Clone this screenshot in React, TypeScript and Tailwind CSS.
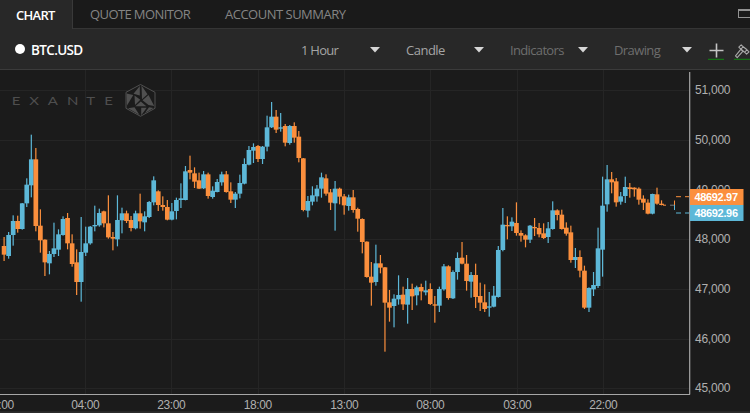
import clsx from "clsx";

const UP = "#5db8d8";
const DOWN = "#fb8f3d";

// direction, high, top, bottom, low - thirds of a pixel below the segment base
type Bar = ["u" | "d", number, number, number, number];

const segments: { base: number; bars: Bar[] }[] = [
  {
    base: 120,
    bars: [
      ["d", 351, 378, 404, 423], ["u", 336, 345, 408, 416], ["u", 286, 303, 345, 377],
      ["d", 287, 303, 327, 338], ["u", 249, 250, 327, 329], ["u", 175, 194, 250, 261],
      ["u", 44, 118, 196, 232], ["d", 84, 118, 318, 334], ["d", 268, 317, 361, 398],
      ["d", 358, 359, 427, 468], ["u", 393, 402, 430, 463], ["u", 308, 385, 402, 411],
      ["u", 328, 343, 389, 408], ["u", 289, 297, 345, 347], ["d", 279, 294, 370, 388],
      ["d", 343, 370, 432, 440], ["d", 388, 427, 486, 525], ["u", 291, 396, 486, 545],
      ["u", 320, 370, 398, 408], ["u", 318, 320, 370, 374], ["u", 257, 315, 319, 334],
      ["u", 266, 279, 316, 320], ["d", 272, 274, 310, 322], ["d", 226, 310, 352, 356],
      ["d", 336, 351, 356, 391], ["u", 226, 300, 358, 379], ["u", 263, 280, 301, 340],
      ["d", 272, 280, 303, 309], ["d", 288, 300, 324, 334], ["u", 272, 280, 325, 328],
      ["d", 221, 280, 304, 326], ["u", 274, 289, 307, 334], ["u", 243, 246, 291, 294],
      ["u", 169, 181, 247, 256], ["d", 211, 214, 255, 273], ["d", 229, 255, 261, 272],
      ["d", 240, 261, 299, 301], ["u", 249, 274, 299, 301], ["u", 233, 240, 273, 298],
      ["u", 190, 235, 240, 264], ["u", 138, 154, 240, 241], ["d", 107, 150, 158, 178],
      ["d", 142, 160, 185, 204], ["d", 158, 181, 206, 207], ["u", 153, 163, 205, 207],
      ["d", 158, 163, 228, 236], ["u", 199, 212, 231, 236], ["u", 177, 186, 216, 217],
      ["u", 155, 163, 187, 197], ["d", 153, 163, 216, 218], ["d", 187, 214, 239, 249],
    ],
  },
  {
    base: 90,
    bars: [
      ["u", 306, 311, 329, 354], ["u", 254, 279, 311, 325], ["u", 205, 222, 281, 283],
      ["u", 168, 180, 224, 226], ["u", 160, 171, 182, 219], ["d", 165, 168, 207, 216],
      ["u", 168, 170, 207, 222], ["u", 77, 112, 170, 184], ["u", 36, 80, 112, 114],
      ["d", 60, 80, 119, 129], ["u", 69, 112, 116, 125], ["d", 102, 108, 158, 169],
      ["u", 105, 108, 159, 164], ["d", 97, 108, 143, 158], ["d", 123, 140, 204, 217],
      ["d", 204, 205, 360, 364], ["u", 318, 333, 362, 382], ["u", 289, 316, 335, 346],
      ["u", 285, 296, 319, 335], ["u", 248, 262, 296, 323], ["d", 253, 265, 311, 317],
      ["d", 297, 307, 338, 360], ["u", 273, 296, 340, 422], ["d", 293, 296, 320, 343],
      ["d", 312, 319, 346, 374], ["u", 314, 322, 348, 362], ["d", 300, 322, 360, 368],
      ["d", 353, 357, 386, 425],
    ],
  },
  {
    base: 170,
    bars: [
      ["d", 145, 147, 216, 250], ["d", 214, 215, 321, 323], ["d", 276, 320, 338, 407],
      ["u", 224, 280, 336, 347], ["d", 255, 280, 293, 310], ["d", 291, 292, 398, 545],
      ["d", 360, 397, 413, 455], ["u", 373, 386, 408, 472], ["u", 316, 375, 388, 404],
      ["d", 350, 374, 403, 420], ["u", 324, 357, 404, 461], ["d", 341, 357, 379, 420],
      ["u", 347, 352, 376, 406], ["d", 341, 351, 364, 391], ["u", 332, 361, 367, 376],
      ["d", 340, 357, 402, 405], ["d", 378, 403, 407, 458], ["u", 350, 357, 407, 426],
      ["u", 282, 289, 358, 362], ["d", 286, 289, 384, 389], ["u", 301, 306, 385, 387],
      ["u", 247, 264, 306, 329],
    ],
  },
  {
    base: 180,
    bars: [
      ["d", 186, 233, 251, 253], ["d", 225, 251, 303, 332], ["u", 276, 285, 305, 353],
      ["d", 251, 285, 351, 384], ["d", 308, 348, 368, 393], ["d", 313, 367, 387, 396],
      ["u", 336, 379, 383, 410], ["u", 318, 347, 380, 382], ["u", 198, 210, 351, 353],
      ["u", 84, 134, 210, 214], ["d", 109, 135, 138, 178], ["u", 112, 125, 139, 153],
      ["d", 67, 129, 159, 167], ["d", 151, 159, 167, 185], ["d", 163, 166, 179, 202],
      ["u", 135, 137, 179, 189], ["d", 114, 141, 144, 168], ["d", 129, 144, 163, 172],
      ["d", 130, 160, 174, 177], ["u", 126, 145, 171, 189], ["u", 64, 91, 147, 149],
      ["d", 88, 91, 105, 121], ["d", 89, 104, 147, 149], ["d", 127, 143, 161, 167],
    ],
  },
  {
    base: 150,
    bars: [
      ["d", 227, 247, 330, 338], ["u", 294, 321, 330, 354], ["d", 301, 321, 362, 382],
      ["d", 347, 362, 473, 477], ["u", 412, 414, 473, 486], ["u", 366, 405, 418, 438],
      ["u", 233, 295, 408, 414], ["u", 80, 167, 299, 380], ["u", 45, 88, 163, 185],
      ["d", 66, 88, 97, 130], ["d", 84, 94, 157, 170], ["u", 126, 139, 155, 164],
      ["u", 80, 111, 138, 159], ["d", 99, 112, 117, 143], ["d", 112, 113, 118, 140],
      ["d", 112, 116, 149, 164], ["d", 136, 146, 158, 180], ["d", 148, 158, 191, 193],
      ["u", 131, 132, 191, 193], ["d", 113, 133, 161, 164], ["d", 151, 161, 165, 166],
    ],
  },
];

const candles = segments
  .flatMap(({ base, bars }) =>
    bars.map(([dir, ...ys]) => ({ dir, ys: ys.map((y) => base + y / 3) })),
  )
  .map((candle, i) => ({ ...candle, x: 4.1 + i * 4.534 }));

const priceLabels = ["51,000", "50,000", "49,000", "48,000", "47,000", "46,000", "45,000"];

const timeLabels = [
  { x: 0, label: "09:00" },
  { x: 85.5, label: "04:00" },
  { x: 171.5, label: "23:00" },
  { x: 258, label: "18:00" },
  { x: 344.5, label: "13:00" },
  { x: 430.5, label: "08:00" },
  { x: 517.5, label: "03:00" },
  { x: 603.5, label: "22:00" },
];

const tabs = [
  { label: "CHART", className: "w-[73px] pl-4 text-white font-semibold tracking-[-0.7px]" },
  { label: "QUOTE MONITOR", className: "w-[134px] pl-[17px] text-[#858585] tracking-[-0.6px]" },
  { label: "ACCOUNT SUMMARY", className: "w-[160px] pl-[18px] text-[#858585] tracking-[-0.5px]" },
];

const selects = [
  { label: "1 Hour", className: "w-[79px] text-[#a5a5a5] tracking-[-0.75px]" },
  { label: "Candle", className: "w-[78px] text-[#a5a5a5] tracking-[-0.5px]" },
  { label: "Indicators", className: "w-[78px] text-[#6e6e6e] tracking-[-0.65px]" },
  { label: "Drawing", className: "w-[78px] text-[#6e6e6e] tracking-[-0.6px]" },
];

function Tabs() {
  return (
    <nav className="flex h-[29px] bg-[#1a1a1a] text-[13px]">
      {tabs.map((tab, i) => (
        <div
          key={tab.label}
          className={clsx(
            "flex shrink-0 items-center whitespace-nowrap pt-0.5",
            i === 0 ? "border-r border-[#393939] bg-[#282828]" : "border-b border-[#353535]",
            tab.className,
          )}
        >
          {tab.label}
        </div>
      ))}
      <div className="flex flex-1 justify-end overflow-hidden border-b border-[#353535] pt-[9px]">
        <div className="-mr-px h-[9px] w-[13px] shrink-0 border border-t-2 border-[#929292]" />
      </div>
    </nav>
  );
}

function Toolbar() {
  return (
    <div className="flex h-[41px] items-center overflow-hidden border-b border-[#3b3b3b] bg-[#282828] text-[13px]">
      <span className="ml-[15px] size-[10px] shrink-0 rounded-full bg-white" />
      <span className="ml-1.5 w-[270px] shrink-0 pt-[3px] text-[13.5px] font-semibold tracking-[-0.65px] text-white">
        BTC.USD
      </span>
      <div className="flex shrink-0 gap-[26px] pt-[3px]">
        {selects.map((select) => (
          <div key={select.label} className={clsx("flex items-center justify-between", select.className)}>
            <span>{select.label}</span>
            <svg width="10" height="6" viewBox="0 0 10 6" className="-mt-[2px]">
              <path d="M0 0h10L5 5.5z" fill="#d6d6d6" />
            </svg>
          </div>
        ))}
      </div>
      <svg width="58" height="40" viewBox="692 29 58 40" className="shrink-0" fill="none">
        <path d="M709.5 50.5h14M716.5 43.5v14" stroke="#c4c4c4" strokeWidth="1.6" />
        <path d="M708 59.3h16M734 59.3h16" stroke="#157315" strokeWidth="1.3" />
        <g stroke="#a9a9a9" strokeWidth="1.1" strokeLinejoin="round">
          <path d="M741 49.2l2 2-5.8 6.4-1.7-1.7z" />
          <path d="M741.2 44.8l2 2-2.4 2.4-2-2zM747 49.8l2 2-2.4 2.4-2-2zM743.2 46.8l3.8 3M740.8 49.2l3.8 3" />
        </g>
      </svg>
    </div>
  );
}

function Watermark() {
  return (
    <g>
      <text
        transform="translate(11.8 105) scale(1.25 1)"
        x="0 13.9 28.8 44.2 59.6 73.9"
        fill="#4e4e4e"
        fontSize="12"
        className="font-['Lato']"
      >
        EXANTE
      </text>
      <path d="M140.5 84.5L155 92.3v16l-14.5 8-14.5-8v-16z" fill="#1b1b1b" stroke="#505050" />
      <g fill="#505050">
        <path d="M139.8 86v9.5l-6.3-1.8zM141.5 85.5l6 8.7-5.5 5z" />
        <path d="M126.5 93.5l6.8 1.5-6.3 10.5z" />
        <path d="M134.5 95.5l5.8 4.3-5.3 5.2zM148.5 95l5.7 11-5.7-1-6-4.7z" />
        <path d="M140.8 101.5l5.5 4.7h-11zM128 108.3l6.5-1 5 7.7z" />
        <path d="M141.2 107.8h5.5l-5.5 7.5zM149 107.2l4.5.8-8.5 4.9z" />
      </g>
    </g>
  );
}

function PriceTag({ y, color, value }: { y: number; color: string; value: string }) {
  return (
    <g>
      <rect x="690" y={y} width="53.5" height="16" fill={color} />
      <text x="694.5" y={y + 11.5} fill="#fff" fontWeight="bold" fontSize="11" textLength="43.5">
        {value}
      </text>
    </g>
  );
}

function Chart() {
  return (
    <svg
      width="750"
      height="343"
      viewBox="0 70 750 343"
      className="block bg-[#1b1b1b] font-['Liberation_Sans',sans-serif]"
    >
      <g stroke="#252525">
        {priceLabels.map((label, i) => (
          <path key={label} d={`M0 ${Math.round(90 + i * 49.7) + 0.5}H689`} />
        ))}
        {timeLabels.slice(1).map(({ x, label }) => (
          <path key={label} d={`M${Math.floor(x) + 0.5} 70V394`} />
        ))}
      </g>

      <Watermark />

      {candles.map(({ dir, x, ys: [high, top, bottom, low] }) => (
        <g key={x} fill={dir === "u" ? UP : DOWN}>
          <rect x={x - 0.6} y={high} width="1.2" height={low - high} />
          <rect x={x - 2.35} y={top} width="4.7" height={Math.max(bottom - top, 1.3)} />
        </g>
      ))}

      {/* forming candle and bid/ask markers */}
      <path d="M663 205.2h3" stroke={DOWN} />
      <path d="M670 205.2h4" stroke="#777" />
      <path d="M674.5 200.5v5" stroke={DOWN} />
      <path d="M674.5 205v5" stroke={UP} />
      <path d="M676 196.7h5M685 196.7h4" stroke={DOWN} />
      <path d="M676 213h5M685 213h4" stroke={UP} />

      <path d="M689.7 72V394.5M0 394.5H690" stroke="#a6a6a6" strokeWidth="1.2" fill="none" />

      <g fill="#b0b0b0" fontSize="12">
        {priceLabels.map((label, i) => (
          <text key={label} x="695" y={94.1 + i * 49.7} textLength="35.5">
            {label}
          </text>
        ))}
        {timeLabels.map(({ x, label }) => (
          <text key={label} x={x} y="408.5" textAnchor="middle" textLength="28.6">
            {label}
          </text>
        ))}
      </g>

      <PriceTag y={189} color={DOWN} value="48692.97" />
      <PriceTag y={205} color={UP} value="48692.96" />
      <rect y="411.3" width="750" height="2" fill="#2b2b2b" />
    </svg>
  );
}

export default function App() {
  return (
    <main className="h-[413px] w-[750px] overflow-hidden bg-[#1b1b1b] font-['Open_Sans','Noto_Sans',sans-serif]">
      <Tabs />
      <Toolbar />
      <Chart />
    </main>
  );
}
